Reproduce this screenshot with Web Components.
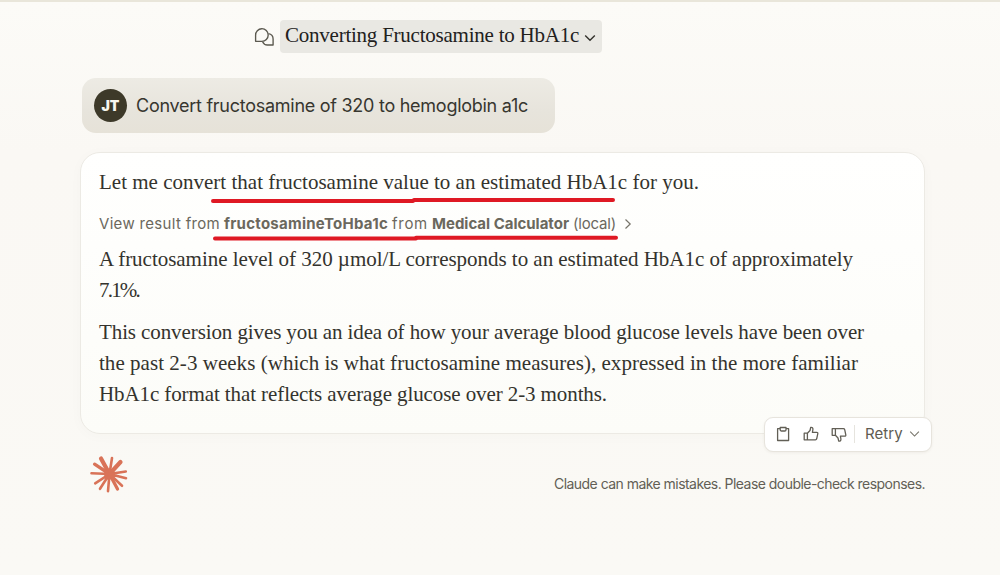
<!DOCTYPE html>
<html lang="en">
<head>
<meta charset="utf-8">
<title>Converting Fructosamine to HbA1c</title>
<style>
  body {
    margin: 0;
    background-color: #faf9f5;
  }
</style>
</head>
<body>

<chat-page>
  <chat-header slot="header"><fit-text width="294">Converting Fructosamine to HbA1c</fit-text></chat-header>

  <user-message initials="JT"><fit-text width="392">Convert fructosamine of 320 to hemoglobin a1c</fit-text></user-message>

  <assistant-message>
    <chat-paragraph>
      <fit-text width="600">Let me convert that fructosamine value to an estimated HbA1c for you.</fit-text>
    </chat-paragraph>
    <tool-result>
      <fit-text width="121">View result from</fit-text>
      <fit-text width="164" bold>fructosamineToHba1c</fit-text>
      <fit-text width="36">from</fit-text>
      <fit-text width="137" bold>Medical Calculator</fit-text>
      <fit-text width="43">(local)</fit-text>
    </tool-result>
    <chat-paragraph>
      <fit-text width="754">A fructosamine level of 320 µmol/L corresponds to an estimated HbA1c of approximately</fit-text>
      <fit-text width="40">7.1%.</fit-text>
    </chat-paragraph>
    <chat-paragraph>
      <fit-text width="765">This conversion gives you an idea of how your average blood glucose levels have been over</fit-text>
      <fit-text width="759">the past 2-3 weeks (which is what fructosamine measures), expressed in the more familiar</fit-text>
      <fit-text width="508">HbA1c format that reflects average glucose over 2-3 months.</fit-text>
    </chat-paragraph>
    <message-actions slot="actions"><fit-text width="38">Retry</fit-text></message-actions>
  </assistant-message>

  <chat-footer slot="footer"><fit-text width="371">Claude can make mistakes. Please double-check responses.</fit-text></chat-footer>
</chat-page>

<script>
const define = (name, html, Base = HTMLElement) => {
  const template = document.createElement('template');
  template.innerHTML = html;

  customElements.define(name, class extends Base {
    constructor() {
      super();
      this.attachShadow({ mode: 'open' });
      this.shadowRoot.appendChild(template.content.cloneNode(true));
    }
  });
};

/* Page */

define('chat-page', /*html*/`
  <style>
    :host {
      --serif: "Liberation Serif", serif;
      --sans: Inter, "Liberation Sans", sans-serif;
      display: flex;
      flex-direction: column;
      box-sizing: border-box;
      height: 575px;
      overflow: hidden;
      border-top: 2px solid #e9e6da;
      background: linear-gradient(#fcfbf7, #faf8f4 150px, #faf9f5);
      color: #34332d;
    }

    main {
      display: flex;
      flex-direction: column;
      align-items: flex-start;
      gap: 19px;
      padding: 25px 75px 0 80px;
    }
  </style>

  <slot name="header"></slot>
  <main><slot></slot></main>
  <slot name="footer"></slot>
`);

/* Header */

define('chat-header', /*html*/`
  <style>
    :host {
      display: flex;
      align-items: center;
      gap: 5px;
      padding: 18px 0 0 254px;
      font: 21px/30px var(--serif);
      color: #22211d;
    }

    .title {
      display: flex;
      align-items: center;
      gap: 5px;
      box-sizing: border-box;
      height: 33px;
      padding: 0 6px 3px 5px;
      border-radius: 4px;
      background-color: #e9e8e3;
    }

    .chevron {
      margin-top: 5px;
    }
  </style>

  <svg width="21" height="20" viewBox="0 0 21 20" fill="none" stroke="#5b594f" stroke-width="1.35" stroke-linejoin="round">
    <path d="M1.6 14.300V8.200a6.300 6.300 0 1 1 6.300 6.100z"/>
    <path d="M14.400 6.600a5.500 5.500 0 0 1 4.700 5.500V18h-5.700a5.400 5.400 0 0 1-4.800-3.300"/>
  </svg>
  <div class="title">
    <slot></slot>
    <svg class="chevron" width="12" height="8" viewBox="0 0 12 8" fill="none" stroke="#33322c" stroke-width="1.4">
      <path d="M1.2 1.4 6 6.2l4.800-4.800"/>
    </svg>
  </div>
`);

/* Messages */

class UserMessage extends HTMLElement {
  connectedCallback() {
    this.shadowRoot.querySelector('.avatar').textContent = this.getAttribute('initials');
  }
}

define('user-message', /*html*/`
  <style>
    :host {
      display: flex;
      align-items: center;
      gap: 9px;
      box-sizing: border-box;
      height: 55px;
      width: 473px;
      margin-left: 2px;
      padding: 0 12px;
      border-radius: 14px;
      background: linear-gradient(#edebe4, #e7e4dc 60%, #e6e2d8);
      font: 18px/28px var(--sans);
      color: #37362f;
    }

    .avatar {
      width: 33px;
      height: 33px;
      border-radius: 50%;
      background-color: #3d3929;
      color: #f8f6ef;
      font-size: 14px;
      font-weight: 900;
      line-height: 33px;
      text-align: center;
    }
  </style>

  <span class="avatar"></span>
  <slot></slot>
`, UserMessage);

define('assistant-message', /*html*/`
  <style>
    :host {
      display: block;
      position: relative;
      box-sizing: border-box;
      width: 845px;
      height: 282px;
      padding: 14px 18px;
      border: 1px solid #eceae4;
      border-radius: 20px;
      background: linear-gradient(#fffffe, #fcfcf8);
      box-shadow: 0 2px 14px rgba(90, 70, 40, .025);
    }

    /* Hand drawn marks and the toolbar lie over the card */

    .marks {
      position: absolute;
      left: 0;
      top: 0;
    }

    ::slotted(message-actions) {
      position: absolute;
      right: -8px;
      bottom: -19px;
    }
  </style>

  <slot></slot>
  <svg class="marks" width="560" height="100" fill="none" stroke="#df1924" stroke-width="4" stroke-linecap="round">
    <path d="M132 48h200M333 47h199"/>
    <path d="M134 85.500h201M335 84.800h200"/>
  </svg>
  <slot name="actions"></slot>
`);

define('chat-paragraph', /*html*/`
  <style>
    :host {
      display: flex;
      flex-direction: column;
      margin-bottom: 11px;
      font: 21px/31px var(--serif);
    }
  </style>

  <slot></slot>
`);

define('tool-result', /*html*/`
  <style>
    :host {
      display: flex;
      align-items: center;
      gap: 4px;
      height: 20px;
      margin: 16px 0 10px;
      font: 15px/20px var(--sans);
      color: #6b685d;
    }

    svg {
      margin-left: 4px;
    }
  </style>

  <slot></slot>
  <svg width="8" height="12" viewBox="0 0 8 12" fill="none" stroke="#77746a" stroke-width="1.200">
    <path d="M1.500 1.500 6.200 6l-4.700 4.500"/>
  </svg>
`);

/* Toolbar */

define('message-actions', /*html*/`
  <style>
    :host {
      display: flex;
      align-items: center;
      box-sizing: border-box;
      width: 168px;
      height: 35px;
      padding: 0 11px 1px 10px;
      border: 1px solid #e7e4dd;
      border-radius: 9px;
      background-color: #fff;
      box-shadow: 0 1px 3px rgba(60, 50, 30, .06);
      font: 15px/20px var(--sans);
      color: #5f5c52;
    }

    .icons {
      display: flex;
      gap: 12px;
      fill: none;
      stroke: #625f56;
      stroke-width: 1.3;
      stroke-linejoin: round;
    }

    .divider {
      width: 1px;
      height: 18px;
      margin: 0 10px 0 7px;
      background-color: #e6e4de;
    }

    .chevron {
      margin-left: 6px;
    }
  </style>

  <span class="icons">
    <svg width="16" height="16" viewBox="0 0 16 16">
      <path d="M5.200 2.700H2.600v11.800h11V2.700H11M5.200 1.500H11v2.300a1.200 1.200 0 0 1-1.200 1.200H6.400a1.200 1.200 0 0 1-1.200-1.200z"/>
    </svg>
    <svg width="16" height="16" viewBox="0 0 16 16">
      <path d="M4.400 7.200H1.200v6.600h3.200zM4.400 7.200 7 4.500 7.700 1.500c1.500-.3 2.400.5 2.200 2L9.400 6.300h4.300c.8 0 1.300.6 1.100 1.400l-1.100 5.100c-.2.700-.7 1-1.300 1h-8"/>
    </svg>
    <svg width="16" height="16" viewBox="0 0 16 16">
      <path transform="translate(0 16.500) scale(1 -1)" d="M4.400 7.200H1.200v6.600h3.200zM4.400 7.200 7 4.500 7.700 1.500c1.500-.3 2.400.5 2.200 2L9.400 6.300h4.300c.8 0 1.300.6 1.100 1.400l-1.100 5.100c-.2.700-.7 1-1.300 1h-8"/>
    </svg>
  </span>
  <span class="divider"></span>
  <slot></slot>
  <svg class="chevron" width="12" height="8" viewBox="0 0 12 8" fill="none" stroke="#77746a" stroke-width="1.200">
    <path d="M1.300 1.500 6 6.200l4.700-4.700"/>
  </svg>
`);

/* Footer */

define('chat-footer', /*html*/`
  <style>
    :host {
      display: flex;
      align-items: flex-start;
      justify-content: space-between;
      padding: 20px 75px 0 89px;
      font: 14px/20px var(--sans);
      color: #625f56;
    }

    slot {
      display: block;
      margin-top: 20px;
    }
  </style>

  <svg width="40" height="40" viewBox="0 0 40 40" stroke="#d97358" stroke-linecap="round">
    <circle cx="20.500" cy="20" r="5.500" fill="#d97358" stroke="none"/>
    <path stroke-width="4.200" d="M20.500 20 12 4.500M20.500 20 31.500 8"/>
    <path stroke-width="3.300" d="M20.500 20 5.600 10.200M20.500 20 28.500 35"/>
    <path stroke-width="2.600" d="M20.500 20 23 4M20.500 20l16.300-2.500M20.500 20 37 24.200M20.500 20 33 31.800M20.500 20 19 37.200M20.500 20 11 34.800M20.500 20 6.200 29.300M20.500 20 2.500 19.300"/>
  </svg>
  <slot></slot>
`);

/* A single line of text, tracked so that it fills the given width */

class FitText extends HTMLElement {
  connectedCallback() {
    const text = this.shadowRoot.querySelector('span');
    const width = Number(this.getAttribute('width'));
    const spacing = (width - text.getBoundingClientRect().width) / this.textContent.length;
    this.style.width = width + 'px';
    text.style.letterSpacing = spacing + 'px';
  }
}

define('fit-text', /*html*/`
  <style>
    :host {
      display: block;
      flex: none;
      white-space: nowrap;
    }

    :host([bold]) {
      font-weight: 700;
    }

    span {
      display: inline-block;
    }
  </style>

  <span><slot></slot></span>
`, FitText);
</script>

</body>
</html>
